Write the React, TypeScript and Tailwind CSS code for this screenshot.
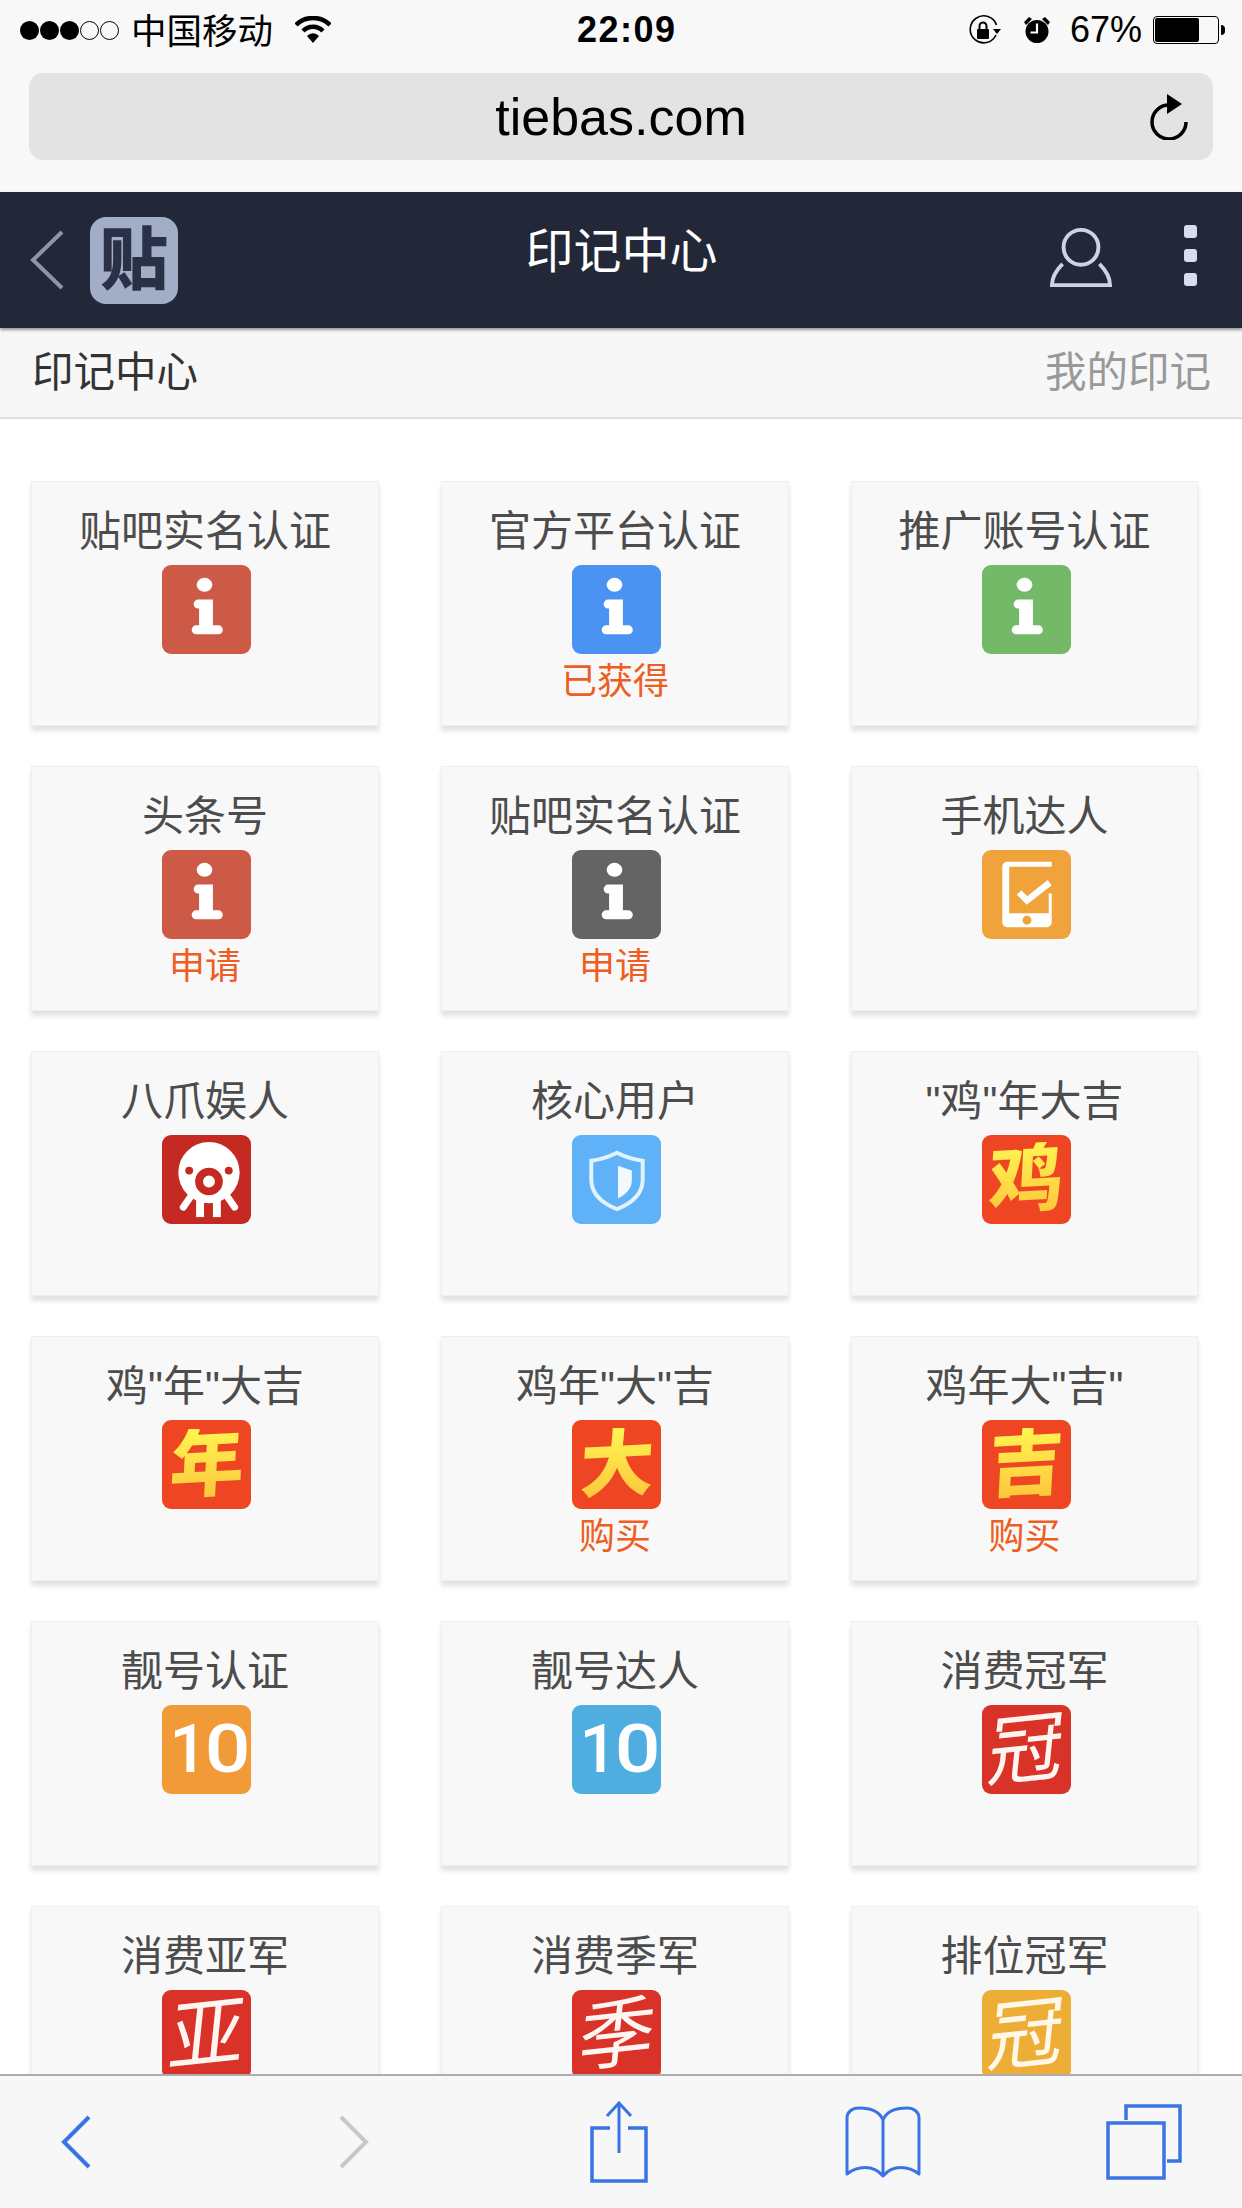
import React from "react";

const CJK = "font-['Liberation_Sans','Noto_Sans_CJK_SC',sans-serif]";

function InfoGlyph() {
  return (
    <svg viewBox="0 0 89 90" className="h-full w-full">
      <ellipse cx="42.5" cy="20" rx="8" ry="7" fill="#fff" />
      <path d="M36 35h15v26h5.5a4.5 4.5 0 0 1 0 9H34a4.5 4.5 0 0 1 0-9h3V44h-1a4.5 4.5 0 0 1 0-9z" fill="#fff" />
    </svg>
  );
}

function PhoneGlyph() {
  return (
    <svg viewBox="0 0 89 90" className="h-full w-full">
      <path d="M25 12h45v5H27v47h40V44h3v29a5 5 0 0 1-5 5H25a5 5 0 0 1-5-5V17a5 5 0 0 1 5-5z" fill="#fff" />
      <circle cx="45" cy="71" r="4.5" fill="#f0a23b" />
      <path d="M37 43l8 8 23-18" fill="none" stroke="#fff" strokeWidth="6.5" />
    </svg>
  );
}

function SkullGlyph() {
  return (
    <svg viewBox="0 0 89 90" className="h-full w-full">
      <circle cx="47" cy="38" r="31" fill="#fff" />
      <rect x="34" y="60" width="8" height="23" fill="#fff" />
      <rect x="51" y="60" width="8" height="23" fill="#fff" />
      <path d="M28 63l-7 10M66 63l7 10" stroke="#fff" strokeWidth="7" strokeLinecap="round" />
      <circle cx="27" cy="36" r="4" fill="#c42a22" />
      <circle cx="67" cy="36" r="4" fill="#c42a22" />
      <circle cx="47" cy="47" r="10" fill="#fff" stroke="#c42a22" strokeWidth="8" />
    </svg>
  );
}

function ShieldGlyph() {
  return (
    <svg viewBox="0 0 89 90" className="h-full w-full">
      <path d="M45 18c8 4 17 7 26 8v19c0 14-11 24-26 30-15-6-26-16-26-30V26c9-1 18-4 26-8z" fill="none" stroke="#e2f2ff" strokeWidth="4" />
      <path d="M46 31l14 5v10c0 7-5 14-14 18z" fill="#f2f9ff" />
    </svg>
  );
}

function TenGlyph() {
  return (
    <div className="flex h-full w-full items-center justify-center pl-[3px] font-['Roboto',sans-serif] text-[66px] leading-none font-medium text-white">
      <span>1</span>
      <span className="ml-[2px] inline-block scale-x-[1.22]">0</span>
    </div>
  );
}

function FlameChar({ c }: { c: string }) {
  return (
    <div className="flex h-full w-full items-center justify-center">
      <span className={`${CJK} inline-block -rotate-3 -skew-x-6 bg-gradient-to-b from-[#fff552] to-[#fcc43a] bg-clip-text text-[74px] leading-none font-black text-transparent`}>{c}</span>
    </div>
  );
}

function BrushChar({ c, color }: { c: string; color: string }) {
  return (
    <div className="flex h-full w-full items-center justify-center">
      <span className={`${CJK} inline-block -rotate-6 -skew-x-12 text-[76px] leading-none font-normal ${color}`}>{c}</span>
    </div>
  );
}

type Item = { title: string; bg: string; glyph: React.ReactNode; sub?: string };

const items: Item[] = [
  { title: "贴吧实名认证", bg: "bg-[#cc5a46]", glyph: <InfoGlyph /> },
  { title: "官方平台认证", bg: "bg-[#4b93f2]", glyph: <InfoGlyph />, sub: "已获得" },
  { title: "推广账号认证", bg: "bg-[#73b968]", glyph: <InfoGlyph /> },
  { title: "头条号", bg: "bg-[#cc5a46]", glyph: <InfoGlyph />, sub: "申请" },
  { title: "贴吧实名认证", bg: "bg-[#646464]", glyph: <InfoGlyph />, sub: "申请" },
  { title: "手机达人", bg: "bg-[#f0a23b]", glyph: <PhoneGlyph /> },
  { title: "八爪娱人", bg: "bg-[#c42a22]", glyph: <SkullGlyph /> },
  { title: "核心用户", bg: "bg-[#5fb2f7]", glyph: <ShieldGlyph /> },
  { title: "\"鸡\"年大吉", bg: "bg-[#ee4522]", glyph: <FlameChar c="鸡" /> },
  { title: "鸡\"年\"大吉", bg: "bg-[#ee4522]", glyph: <FlameChar c="年" /> },
  { title: "鸡年\"大\"吉", bg: "bg-[#ee4522]", glyph: <FlameChar c="大" />, sub: "购买" },
  { title: "鸡年大\"吉\"", bg: "bg-[#ee4522]", glyph: <FlameChar c="吉" />, sub: "购买" },
  { title: "靓号认证", bg: "bg-[#f09a38]", glyph: <TenGlyph /> },
  { title: "靓号达人", bg: "bg-[#4fade0]", glyph: <TenGlyph /> },
  { title: "消费冠军", bg: "bg-[#d93228]", glyph: <BrushChar c="冠" color="text-[#fff5f0]" /> },
  { title: "消费亚军", bg: "bg-[#d93228]", glyph: <BrushChar c="亚" color="text-[#fff5f0]" /> },
  { title: "消费季军", bg: "bg-[#d93228]", glyph: <BrushChar c="季" color="text-[#fff5f0]" /> },
  { title: "排位冠军", bg: "bg-[#edae38]", glyph: <BrushChar c="冠" color="text-[#fff8e8]" /> },
];

function Card({ item }: { item: Item }) {
  return (
    <div className="flex h-[245px] flex-col items-center border border-[#efefef] bg-[#f8f8f8] pt-[25px] shadow-[0_5px_5px_rgba(0,0,0,0.12)]">
      <div className={`${CJK} h-[50px] text-[42px] leading-[50px] whitespace-nowrap text-[#4c4c4c]`}>{item.title}</div>
      <div className={`mt-[8px] ml-[3px] h-[89px] w-[89px] shrink-0 rounded-[9px] ${item.bg}`}>{item.glyph}</div>
      {item.sub && <div className={`${CJK} mt-[6px] text-[36px] leading-[44px] text-[#ee5d22]`}>{item.sub}</div>}
    </div>
  );
}

function StatusBar() {
  return (
    <div className="flex h-[60px] items-center pr-[17px] pl-[20px] text-black">
      <div className="flex w-[557px] items-center">
        <div className="flex items-center gap-[1px]">
          {[0, 1, 2].map((i) => (
            <span key={i} className="h-[19px] w-[19px] rounded-full bg-black" />
          ))}
          {[0, 1].map((i) => (
            <span key={i} className="h-[19px] w-[19px] rounded-full border border-black" />
          ))}
        </div>
        <span className={`${CJK} mt-[5px] ml-[12px] text-[35.5px] leading-none`}>中国移动</span>
        <svg viewBox="0 0 36 28" className="ml-[22px] h-[28px] w-[36px]">
          <path d="M1 9a24 24 0 0 1 34 0" fill="none" stroke="#000" strokeWidth="4.5" />
          <path d="M8 15a14 14 0 0 1 20 0" fill="none" stroke="#000" strokeWidth="4.5" />
          <path d="M12 20a8 8 0 0 1 12 0l-6 7z" fill="#000" />
        </svg>
      </div>
      <span className="font-['Liberation_Sans',sans-serif] text-[36px] leading-none font-bold tracking-[1.5px]">22:09</span>
      <div className="ml-auto flex items-center">
        <svg viewBox="0 0 34 30" className="h-[30px] w-[34px]">
          <path d="M28.5 10A13.5 13.5 0 1 0 28 20" fill="none" stroke="#000" strokeWidth="1.6" />
          <path d="M25 14h8l-4 5z" fill="#000" />
          <path d="M11.500 15v-4a3.500 3.500 0 0 1 7 0v4" fill="none" stroke="#000" strokeWidth="2" />
          <rect x="9" y="14" width="12" height="10" rx="1" fill="#000" />
        </svg>
        <svg viewBox="0 0 28 28" className="ml-[21px] h-[28px] w-[28px]">
          <circle cx="14" cy="15.500" r="11.500" fill="#000" />
          <path d="M1 6l5-5 3 2-6 6zM27 6l-5-5-3 2 6 6z" fill="#000" />
          <path d="M14 7.500v9H7.500" fill="none" stroke="#fff" strokeWidth="2.200" />
        </svg>
        <span className="ml-[19px] font-['Liberation_Sans',sans-serif] text-[36px] leading-none">67%</span>
        <div className="ml-[11px] flex items-center">
          <div className="h-[28px] w-[66px] rounded-[4px] border border-black p-[1px]">
            <div className="h-full w-[44px] rounded-[2px] bg-black" />
          </div>
          <div className="ml-[2px] h-[10px] w-[4px] rounded-r-full bg-black" />
        </div>
      </div>
    </div>
  );
}

export default function App() {
  return (
    <div className="flex h-[2208px] w-[1242px] flex-col overflow-hidden bg-white">
      <div className="h-[192px] shrink-0 bg-[#f8f8f8]">
        <StatusBar />
        <div className="mx-[29px] mt-[13px] flex h-[87px] items-center rounded-[14px] bg-[#e3e3e3]">
          <span className="ml-[65px] flex-1 text-center font-['Liberation_Sans',sans-serif] text-[52px] leading-none text-black">tiebas.com</span>
          <svg viewBox="0 0 40 46" className="mr-[25px] h-[46px] w-[40px]">
            <path d="M20 9a17 17 0 1 0 17 17" fill="none" stroke="#000" strokeWidth="3.5" transform="translate(1 2)" />
            <path d="M19 0l15 10-15 10z" fill="#000" />
          </svg>
        </div>
      </div>

      <div className="z-10 flex h-[136px] shrink-0 items-center bg-[#222838] pr-[45px] pl-[30px] shadow-[0_2px_3px_rgba(0,0,0,0.4)]">
        <div className="flex flex-1 items-center">
          <svg viewBox="0 0 34 60" className="h-[60px] w-[34px]">
            <path d="M32 2L3 30l29 28" fill="none" stroke="#8e95a4" strokeWidth="4" />
          </svg>
          <div className="ml-[26px] flex h-[87px] w-[88px] items-center justify-center rounded-[16px] bg-[#a2adc8]">
            <span className={`${CJK} text-[68px] leading-none font-black text-[#2a3046]`}>贴</span>
          </div>
        </div>
        <span className={`${CJK} mt-[-17px] ml-[16px] text-[48px] leading-none text-white`}>印记中心</span>
        <div className="flex flex-1 items-center justify-end">
          <svg viewBox="0 0 64 62" className="mt-[-7px] h-[62px] w-[62px]">
            <circle cx="32" cy="21" r="18" fill="none" stroke="#cdd3e2" strokeWidth="4" />
            <path d="M13 38C7 44 2 52 2 60h60c0-8-5-16-11-22" fill="none" stroke="#cdd3e2" strokeWidth="4" />
          </svg>
          <div className="mt-[-9px] ml-[72px] flex flex-col gap-[11px]">
            {[0, 1, 2].map((i) => (
              <span key={i} className="h-[13px] w-[13px] rounded-[3px] bg-[#d8deef]" />
            ))}
          </div>
        </div>
      </div>

      <div className="flex h-[91px] shrink-0 items-center justify-between border-b-2 border-[#dedede] bg-[#f7f7f7] pr-[31px] pl-[32px]">
        <span className={`${CJK} text-[41.5px] leading-none text-[#333]`}>印记中心</span>
        <span className={`${CJK} text-[41.5px] leading-none text-[#999]`}>我的印记</span>
      </div>

      <div className="grid flex-1 grid-cols-[348px_348px_347px] content-start gap-x-[62px] gap-y-[40px] overflow-hidden pt-[62px] pl-[31px]">
        {items.map((item, i) => (
          <Card key={i} item={item} />
        ))}
      </div>

      <div className="z-10 flex h-[134px] shrink-0 items-center border-t-2 border-[#adadad] bg-[#f7f7f7] pl-[61px]">
        <svg viewBox="0 0 30 54" className="h-[54px] w-[30px]">
          <path d="M28 2L3 27l25 25" fill="none" stroke="#3a74e4" strokeWidth="4" />
        </svg>
        <svg viewBox="0 0 30 54" className="ml-[248px] h-[54px] w-[30px]">
          <path d="M2 2l25 25L2 52" fill="none" stroke="#c8c8c8" strokeWidth="4" />
        </svg>
        <svg viewBox="0 0 58 82" className="ml-[221px] h-[82px] w-[58px]">
          <path d="M20 27H2v53h54V27H38" fill="none" stroke="#3a74e4" strokeWidth="3.5" />
          <path d="M29 2v50M17 15L29 2l12 13" fill="none" stroke="#3a74e4" strokeWidth="3" />
        </svg>
        <svg viewBox="0 0 76 72" className="ml-[197px] h-[72px] w-[76px]">
          <path d="M38 14C34 4 24 2 14 2 7 2 2 6 2 12v56c10-8 26-10 36 2 10-12 26-10 36-2V12c0-6-5-10-12-10-10 0-20 2-24 12zM38 14v56" fill="none" stroke="#3a74e4" strokeWidth="3" strokeLinejoin="round" />
        </svg>
        <svg viewBox="0 0 76 76" className="ml-[185px] h-[76px] w-[76px]">
          <path d="M20 16V2h54v55H61" fill="none" stroke="#3a74e4" strokeWidth="3.5" />
          <rect x="2" y="19" width="56" height="55" fill="none" stroke="#3a74e4" strokeWidth="3.5" />
        </svg>
      </div>
    </div>
  );
}
